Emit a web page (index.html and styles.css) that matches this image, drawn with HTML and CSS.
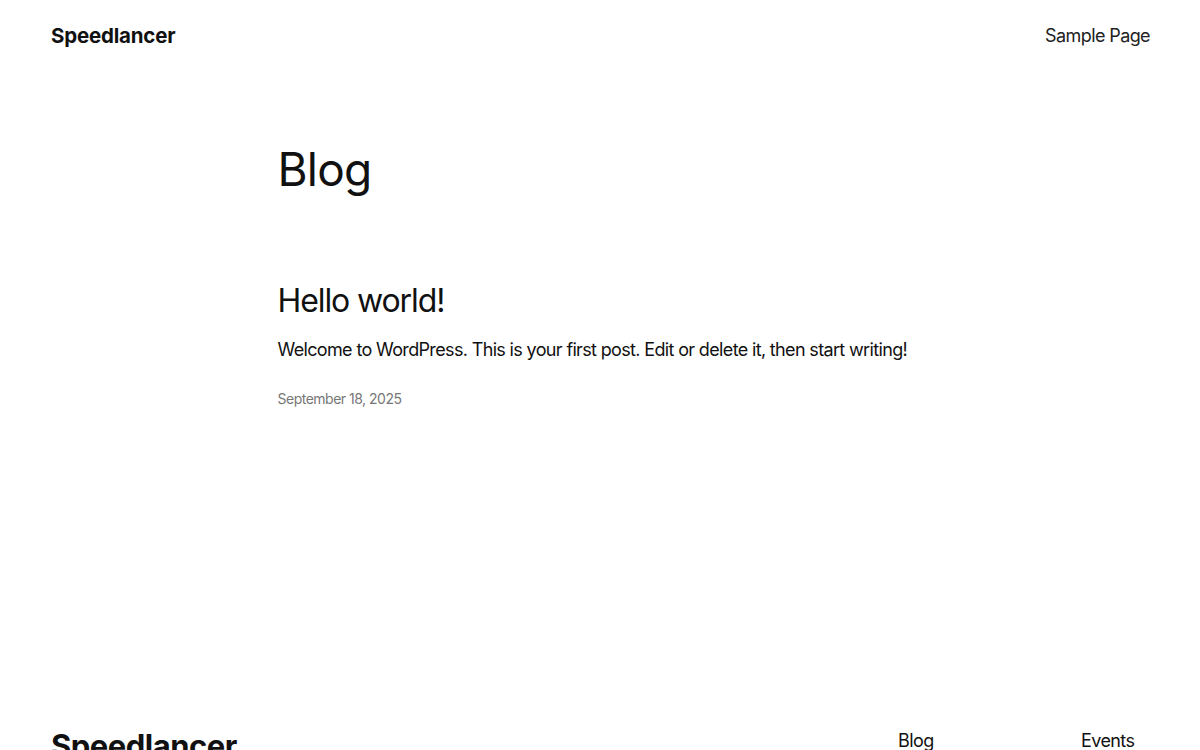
FILE: index.html
```html
<!DOCTYPE html>
<html lang="en">
<head>
<meta charset="utf-8">
<title>Blog – Speedlancer</title>
<link rel="stylesheet" href="styles.css">
</head>
<body>
<header class="site-header">
  <a class="site-title" href="#">Speedlancer</a>
  <nav class="header-nav"><a href="#">Sample Page</a></nav>
</header>
<main class="main">
  <h1 class="page-title">Blog</h1>
  <article class="post">
    <h2 class="post-title"><a href="#">Hello world!</a></h2>
    <p class="post-excerpt">Welcome to WordPress. This is your first post. Edit or delete it, then start writing!</p>
    <time class="post-date">September 18, 2025</time>
  </article>
</main>
<footer class="site-footer">
  <a class="footer-title" href="#">Speedlancer</a>
  <div class="footer-navs">
    <ul class="footer-col">
      <li><a href="#">Blog</a></li>
      <li><a href="#">About</a></li>
      <li><a href="#">FAQs</a></li>
      <li><a href="#">Authors</a></li>
    </ul>
    <ul class="footer-col">
      <li><a href="#">Events</a></li>
      <li><a href="#">Shop</a></li>
      <li><a href="#">Patterns</a></li>
      <li><a href="#">Themes</a></li>
    </ul>
  </div>
</footer>
</body>
</html>
```
FILE: styles.css
```css
html, body {
  margin: 0;
  padding: 0;
  background: #ffffff;
}
body {
  font-family: Inter, "Noto Sans", "Liberation Sans", sans-serif;
  color: #111111;
  letter-spacing: -0.1px;
}
a {
  color: inherit;
  text-decoration: none;
}
.site-header {
  display: flex;
  justify-content: space-between;
  align-items: center;
  padding: 0 50px 0 51px;
  height: 70px;
}
.site-title {
  font-size: 20.5px;
  font-weight: 700;
  letter-spacing: -0.2px;
}
.header-nav a {
  font-size: 18px;
  font-weight: 400;
  letter-spacing: -0.6px;
  color: #222;
}
.main {
  width: 645px;
  margin: 0 auto;
  padding-top: 72px;
  min-height: 585px;
}
.page-title {
  margin: 0;
  font-size: 46px;
  font-weight: 400;
  line-height: 1.2;
  letter-spacing: -0.8px;
}
.post {
  margin-top: 85px;
}
.post-title {
  margin: 0;
  font-size: 32px;
  font-weight: 400;
  line-height: 1.2;
  letter-spacing: -1.1px;
}
.post-excerpt {
  margin: 15px 0 0;
  font-size: 18px;
  line-height: 1.5;
  letter-spacing: -0.65px;
  white-space: nowrap;
}
.post-date {
  display: block;
  margin-top: 27px;
  font-size: 14px;
  color: #777;
  letter-spacing: -0.5px;
}
.site-footer {
  display: flex;
  justify-content: space-between;
  align-items: flex-start;
  padding: 0 50px 0 51px;
}
.footer-title {
  font-size: 31px;
  font-weight: 700;
  letter-spacing: -0.5px;
  line-height: 1.2;
}
.footer-navs {
  display: grid;
  grid-template-columns: 183px 69px;
  padding-top: 3px;
}
.footer-col {
  list-style: none;
  margin: 0;
  padding: 0;
  display: flex;
  flex-direction: column;
  gap: 12px;
}
.footer-col a {
  font-size: 18px;
  letter-spacing: -0.6px;
}
```
